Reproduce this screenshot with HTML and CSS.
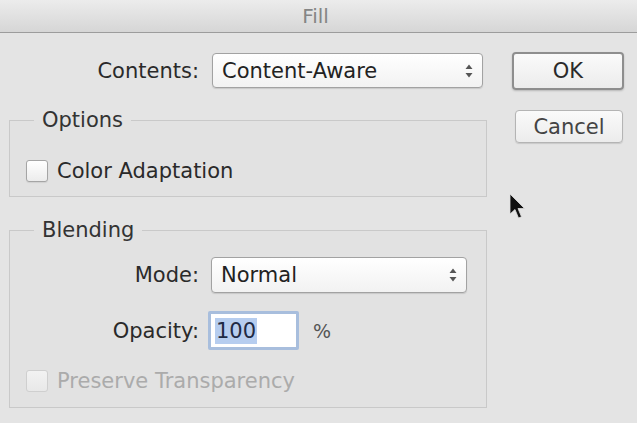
FILE: index.html
```html
<!DOCTYPE html>
<html>
<head>
<meta charset="utf-8">
<link rel="stylesheet" href="styles.css">
</head>
<body>
<div class="window">
  <div class="titlebar">Fill</div>
  <div class="content">
    <div class="main">
      <div class="row contents-row">
        <span class="lbl">Contents:</span>
        <div class="select sel-contents">
          <span>Content-Aware</span>
          <svg class="arrows" width="8" height="14" viewBox="0 0 8 14"><path d="M4 0.5 L7.5 5 L0.5 5 Z M4 13.5 L7.5 9 L0.5 9 Z" fill="#555"/></svg>
        </div>
      </div>
      <fieldset class="group group-options">
        <legend>Options</legend>
        <div class="check-row">
          <span class="checkbox"></span>
          <span>Color Adaptation</span>
        </div>
      </fieldset>
      <fieldset class="group group-blending">
        <legend>Blending</legend>
        <div class="row mode-row">
          <span class="lbl lbl-in">Mode:</span>
          <div class="select sel-mode">
            <span>Normal</span>
            <svg class="arrows" width="8" height="14" viewBox="0 0 8 14"><path d="M4 0.5 L7.5 5 L0.5 5 Z M4 13.5 L7.5 9 L0.5 9 Z" fill="#555"/></svg>
          </div>
        </div>
        <div class="row opacity-row">
          <span class="lbl lbl-in">Opacity:</span>
          <div class="textfield"><span class="selected">100</span></div>
          <span class="pct">%</span>
        </div>
        <div class="check-row disabled">
          <span class="checkbox"></span>
          <span>Preserve Transparency</span>
        </div>
      </fieldset>
    </div>
    <div class="buttons">
      <div class="btn btn-default">OK</div>
      <div class="btn btn-cancel">Cancel</div>
    </div>
  </div>
  <svg class="cursor" width="18" height="28" viewBox="0 0 18 28"><path d="M1 1 L1 21 L6 16.5 L9.5 25 L12.5 23.8 L9 15.5 L15.5 15.5 Z" fill="#111" stroke="#ddd" stroke-width="0.8"/></svg>
</div>
</body>
</html>
```

FILE: styles.css
```css
html, body {
  margin: 0;
  padding: 0;
}
body {
  background: #e4e4e4;
  font-family: "DejaVu Sans", "Liberation Sans", sans-serif;
  font-size: 21px;
  color: #2a2a2a;
}
.window {
  position: relative;
  width: 637px;
  height: 423px;
  overflow: hidden;
  background: #e4e4e4;
}
.titlebar {
  height: 32px;
  line-height: 32px;
  text-align: center;
  color: #858585;
  font-size: 20px;
  background: linear-gradient(#ececec, #d6d6d6);
  border-bottom: 1px solid #9c9c9c;
  padding-right: 6px;
}
.content {
  display: flex;
  padding-left: 9px;
}
.main {
  width: 478px;
}
.row {
  display: flex;
  align-items: center;
}
.contents-row {
  margin-top: 20px;
  height: 35px;
}
.lbl {
  width: 190px;
  text-align: right;
  margin-right: 13px;
  flex: none;
}
.lbl-in {
  width: 189px;
  margin-right: 12px;
}
.select {
  box-sizing: border-box;
  display: flex;
  align-items: center;
  justify-content: space-between;
  background: linear-gradient(#ffffff, #f2f2f2);
  border: 1px solid #a2a2a2;
  border-radius: 4px;
  box-shadow: 0 1px 1px rgba(0,0,0,0.12);
  padding: 0 9px 0 9px;
  color: #222;
}
.sel-contents {
  width: 271px;
  height: 35px;
}
.sel-mode {
  width: 256px;
  height: 36px;
}
.arrows {
  flex: none;
}
.group {
  box-sizing: border-box;
  width: 478px;
  margin: 0;
  border: 1px solid #c9c9c9;
  background: #e2e2e2;
  min-inline-size: 0;
}
.group legend {
  margin-left: 24px;
  padding: 0 8px;
  line-height: 24px;
  color: #333;
}
.group-options {
  margin-top: 20px;
  padding: 27px 0 13px 0;
}
.group-blending {
  margin-top: 21px;
  padding: 15px 0 14px 0;
}
.check-row {
  display: flex;
  align-items: center;
  height: 24px;
  padding-left: 16px;
}
.group-blending .check-row {
  margin-top: 19px;
}
.checkbox {
  box-sizing: border-box;
  width: 22px;
  height: 22px;
  margin-right: 9px;
  border: 1px solid #a5a5a5;
  border-radius: 3px;
  background: linear-gradient(#ffffff, #ececec);
  box-shadow: 0 1px 1px rgba(0,0,0,0.08);
  flex: none;
}
.disabled {
  color: #ababab;
}
.disabled .checkbox {
  border-color: #cfcfcf;
  background: linear-gradient(#f2f2f2, #e8e8e8);
  box-shadow: none;
}
.opacity-row {
  margin-top: 18px;
  height: 39px;
}
.opacity-row .lbl-in {
  margin-right: 9px;
}
.textfield {
  box-sizing: border-box;
  width: 91px;
  height: 39px;
  border: 3px solid #a8bedd;
  border-radius: 2px;
  background: #fff;
  display: flex;
  align-items: center;
  padding-left: 4px;
  color: #1f2a44;
}
.selected {
  background: #b6cdef;
  padding: 0 1px;
  line-height: 26px;
}
.pct {
  margin-left: 14px;
  font-size: 19px;
  color: #555;
}
.buttons {
  margin-left: 25px;
  display: flex;
  flex-direction: column;
  align-items: flex-start;
}
.btn {
  box-sizing: border-box;
  display: flex;
  align-items: center;
  justify-content: center;
  background: linear-gradient(#fafafa, #ececec);
  border-radius: 4px;
  color: #2a2a2a;
}
.btn-default {
  margin-top: 19px;
  width: 112px;
  height: 38px;
  border: 2px solid #8e8e8e;
  box-shadow: 0 1px 2px rgba(0,0,0,0.2);
}
.btn-cancel {
  margin-top: 20px;
  margin-left: 3px;
  width: 108px;
  height: 33px;
  border: 1px solid #b4b4b4;
  box-shadow: 0 1px 1px rgba(0,0,0,0.12);
  color: #444;
}
.cursor {
  position: absolute;
  left: 509px;
  top: 193px;
  filter: blur(0.5px);
}
```
